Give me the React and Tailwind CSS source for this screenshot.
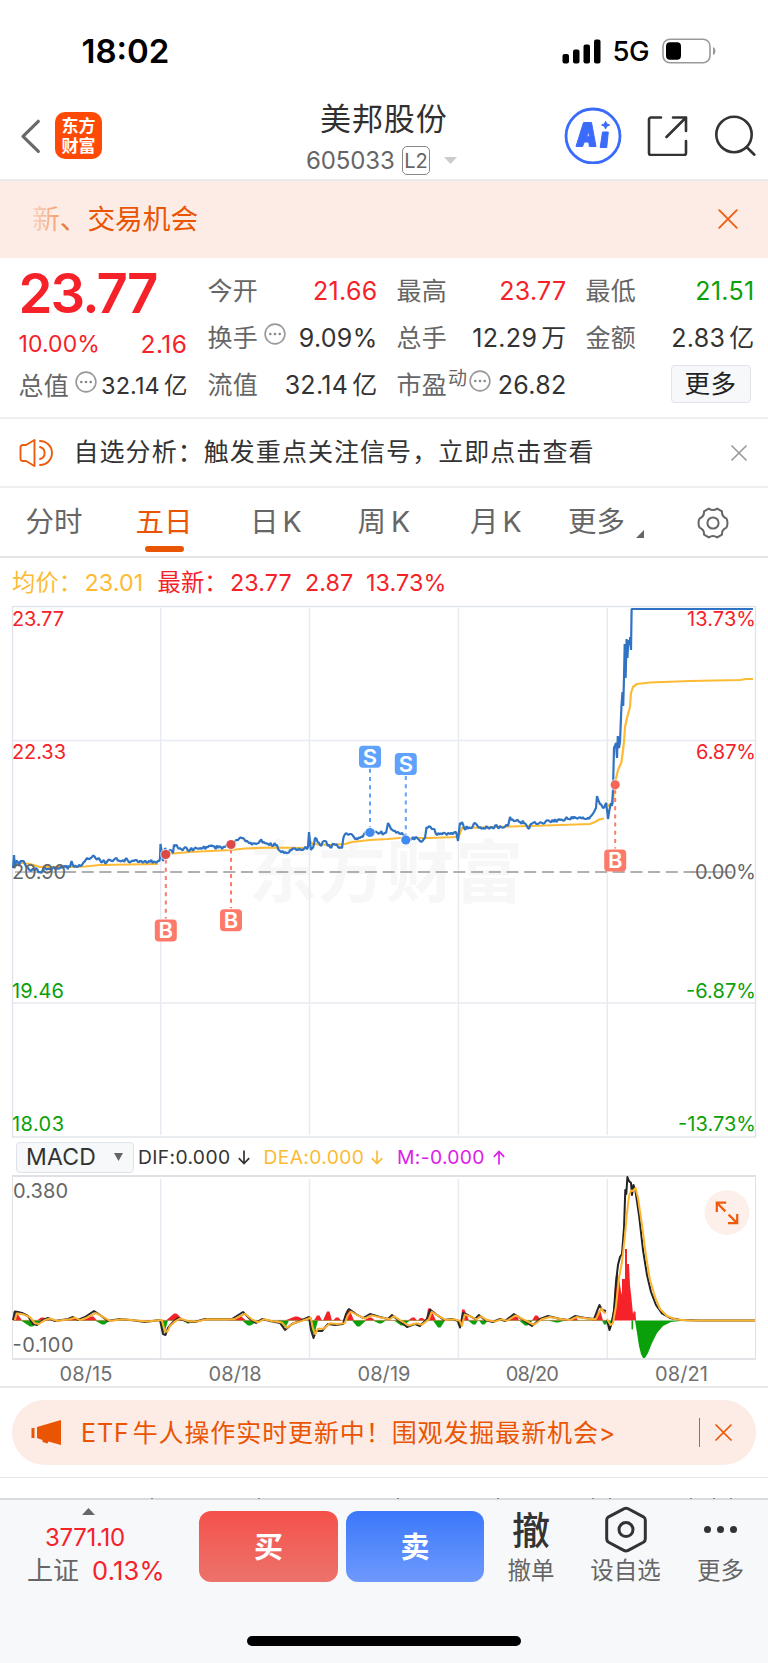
import React from "react";

const FONT = "font-['Inter','Noto_Sans_CJK_SC',sans-serif]";

function rng(seed) {
  let s = seed;
  return () => {
    s = (s * 16807) % 2147483647;
    return s / 2147483647 - 0.5;
  };
}

// Adds intraday jitter between the key points of a series.
function jitter(points, amp, seed) {
  const rand = rng(seed);
  const out = [];
  for (let i = 0; i < points.length - 1; i++) {
    const [x0, y0] = points[i];
    const [x1, y1] = points[i + 1];
    out.push([x0, y0]);
    for (let x = x0 + 1.3; x < x1 - 0.6; x += 1.3) {
      const t = (x - x0) / (x1 - x0);
      out.push([x, y0 + (y1 - y0) * t + rand() * amp]);
    }
  }
  out.push(points[points.length - 1]);
  return out;
}

const toLine = (pts) => pts.map(([x, y]) => `${x.toFixed(1)},${y.toFixed(1)}`).join(" ");

const PRICE = [
  [13, 868], [14, 855], [15, 867], [17, 861], [19, 866], [21, 861], [25, 864], [28, 868], [31, 871], [36, 868], [40, 872], [45, 868], [52, 869], [60, 868], [70, 867],
  [71.5, 861], [74, 867], [82, 865], [88, 859], [92, 857], [100, 860], [106, 863], [110, 860], [125, 860], [140, 861], [150, 862],
  [158, 861], [160, 858], [160.5, 844], [163, 861], [165, 848], [168, 854], [171, 850], [173, 853], [174, 845], [180, 848], [190, 850], [200, 848], [225, 847],
  [231, 843], [238, 840], [243, 838], [248, 842], [256, 844], [260, 841], [268, 844], [277, 845], [280, 851], [284, 853], [290, 850], [303, 850],
  [308, 847], [309, 832], [311, 850], [313, 848], [315, 838], [320, 845], [325, 841], [330, 847], [334, 844], [342, 848], [344, 836], [350, 834],
  [356, 838], [360, 838], [364, 834], [368, 832], [380, 833], [386, 833], [388, 823], [391, 829], [398, 832], [404, 835], [407, 840],
  [413, 837], [420, 841], [425, 838], [426.5, 827.5], [433, 829], [437, 835], [443, 833], [450, 834], [456, 832], [458, 841], [460, 823],
  [462, 822], [464, 828], [470, 828], [475, 823], [480, 827], [490, 828], [500, 826], [508, 826], [510, 817], [515, 821], [525, 823],
  [529, 829], [531, 824], [538, 824], [546, 821], [560, 820], [575, 818], [590, 817], [594, 812], [596, 808], [597, 796], [600, 804], [603, 808],
  [606, 803], [608, 819], [611, 803], [612, 806], [613, 790], [614, 748], [616, 743], [617, 758], [617.8, 736], [619, 748], [620, 742],
  [621.5, 705], [622.5, 692], [623.2, 706], [624, 678], [624.7, 644], [625.6, 678], [626.6, 639], [627.4, 658], [628.4, 640], [629.4, 645],
  [630.2, 637], [631, 650], [631.6, 609], [753, 609],
];

const AVERAGES = [
  [[13, 862], [30, 864], [40, 867], [70, 867], [85, 866.5], [100, 865], [158, 864]],
  [[160, 848], [163, 852], [173, 853.5], [190, 852], [231, 850], [245, 848.5], [270, 847.5], [306, 848]],
  [[309, 840], [313, 844], [330, 845], [345, 844], [352, 842], [370, 840], [388, 839], [400, 838], [430, 838], [456, 837]],
  [[458, 838], [462, 828], [480, 827.5], [510, 826.5], [530, 826], [560, 825], [590, 824], [595, 822], [599, 819.5], [604, 818.5]],
  [[606, 803], [609, 806], [613, 803], [614.5, 785], [618, 770], [621.5, 762], [624, 742], [625, 727], [627, 718], [630, 707], [631, 693], [633, 687], [637, 684], [650, 682.5], [690, 681], [740, 680], [746, 679], [753, 679]],
];

const Z = 1320.4;

const DIF_EARLY = [
  [13, 1320], [15, 1311.5], [18, 1312], [22, 1313], [28, 1316], [33, 1324], [37, 1325], [43, 1320], [48, 1318], [55, 1321], [62, 1320], [68, 1319],
  [73, 1317], [78, 1320], [85, 1317], [94, 1311], [100, 1315], [108, 1321], [120, 1319], [135, 1320.5], [145, 1322], [160, 1320], [163, 1334], [165.5, 1335],
  [168, 1328], [173, 1322], [178, 1318], [188, 1322], [195, 1322], [205, 1319], [218, 1319], [232, 1319], [243, 1312], [250, 1319], [256, 1323],
  [262, 1319], [270, 1321], [280, 1323], [285, 1330], [292, 1324], [300, 1321], [309, 1317], [311, 1330], [313.5, 1338], [316, 1331], [322, 1331], [328, 1324],
  [335, 1325], [343, 1324], [346, 1314], [349, 1309], [356, 1314], [363, 1318], [370, 1314], [380, 1317], [388, 1319], [392, 1315], [398, 1320], [407, 1327],
  [415, 1324], [420, 1326], [427, 1319], [430, 1309.5], [437, 1315], [444, 1320], [452, 1319], [458, 1321], [460, 1327.5], [463, 1313], [468, 1315],
  [475, 1319], [479, 1315], [485, 1320], [493, 1322], [500, 1319], [505, 1321], [514, 1314], [523, 1320], [532, 1326], [540, 1319], [548, 1316],
  [560, 1319], [568, 1320], [575, 1316], [585, 1318], [594, 1319], [597, 1311], [599.5, 1305], [602, 1310], [606, 1311],
];
const DEA_EARLY = DIF_EARLY.map(([x, y]) => [Math.min(x + 1.8, 606), Z + (y - Z) * 0.78]);

const DIF_LATE = [
  [607, 1320], [609.5, 1330], [612, 1322], [614, 1310], [616, 1282], [618, 1265], [620, 1257], [622, 1254], [624, 1228], [625.3, 1190], [626.3, 1194],
  [627.4, 1177], [629, 1181], [631, 1183], [632, 1195], [633.5, 1185], [635.5, 1191], [639, 1215], [643, 1250], [647, 1275], [651, 1292], [656, 1305],
  [662, 1313.5], [670, 1318], [680, 1320], [700, Z], [755, Z],
];
const DEA_LATE = [
  [607, 1319], [610.5, 1325], [613, 1323], [616, 1306], [619, 1278], [622, 1262], [625, 1235], [627, 1213], [629, 1196], [631, 1190.5], [633, 1191],
  [635.5, 1188], [638, 1198], [642, 1225], [646, 1256], [650, 1280], [655, 1297], [660, 1309], [667, 1316], [676, 1319.5], [690, Z], [755, Z],
];

// [start, peak, end, height] of each histogram hump.
const RED = [
  [13, 14.5, 22, 9], [37, 42, 50, 3], [66, 72, 80, 2.5], [82, 92, 97, 4], [166, 175, 184, 7], [228, 240, 246, 4], [285, 296, 307, 4], [314, 318, 322, 5],
  [323, 328, 332, 9], [333, 337, 341, 3], [343, 348, 354, 11], [364, 370, 375, 3], [408, 413, 417, 3], [418, 421, 426, 2.5], [426, 429, 436, 12], [461, 463, 469, 11],
  [508, 515, 519, 6], [532, 536, 541, 5], [571, 575, 578, 2.5], [592, 599, 603, 9],
];
const GREEN = [
  [21, 31, 42, -6], [95, 103, 110, -4], [160, 163, 168, -12], [185, 188, 191, -3], [242, 249, 259, -5], [278, 284, 289, -7], [309, 313, 318, -13],
  [352, 358, 366, -6], [373, 380, 386, -3], [394, 402, 410, -5], [433, 439, 445, -7], [457, 459, 461, -5], [468, 474, 478, -4], [479, 483, 488, -4],
  [519, 526, 533, -5], [548, 557, 565, -2], [602, 605, 607, -4], [607, 610, 612, -6],
];

function Bars({ data, color }) {
  return data.map(([a, p, b, h]) => (
    <polygon key={a} fill={color} points={`${a},${Z} ${p - 1},${Z - h} ${p + 1.5},${Z - h} ${b},${Z}`} />
  ));
}

function AxisText({ x, y, w, fill, end, children }) {
  return (
    <text x={end ? x - w : x} y={y} textLength={w} fill={fill} fontSize="20" className={FONT}>
      {children}
    </text>
  );
}

function Marker({ x, dotY, boxY, label, color, dark }) {
  const from = boxY > dotY ? dotY + 5 : boxY + 12;
  const to = boxY > dotY ? boxY - 12 : dotY - 5;
  return (
    <g>
      <line x1={x} x2={x} y1={from} y2={to} stroke={color} strokeWidth="2" strokeDasharray="4 4.2" />
      <circle cx={x} cy={dotY} r="5.8" fill="white" opacity="0.6" />
      <circle cx={x} cy={dotY} r="4.6" fill={dark} />
      <rect x={x - 11} y={boxY - 11} width="22" height="22" rx="4" fill={color} />
      <text x={x} y={boxY + 7.8} textAnchor="middle" fontSize="22" fontWeight="600" fill="white" className={FONT}>
        {label}
      </text>
    </g>
  );
}

function PriceChart() {
  const red = "#f5222a";
  const green = "#0aa00a";
  return (
    <svg className="block h-[538px] w-[768px] shrink-0" viewBox="0 600 768 538">
      <g fill="#f7f7f7" fontSize="68" fontWeight="700" className="font-['Noto_Sans_CJK_SC',sans-serif]">
        <text x="249" y="897" textLength="274">东方财富</text>
      </g>
      <g stroke="#e7eaf1" strokeWidth="1.5">
        <line x1="12" x2="756" y1="740.5" y2="740.5" />
        <line x1="12" x2="756" y1="1003" y2="1003" />
        {[160.7, 309.5, 458.4, 607.3].map((x) => (
          <line key={x} x1={x} x2={x} y1="608" y2="1135" />
        ))}
      </g>
      <rect x="12.5" y="606.5" width="743" height="530.5" fill="none" stroke="#dfe3e9" strokeWidth="1.3" />
      <line x1="64" x2="700" y1="872" y2="872" stroke="#b0b0b0" strokeWidth="2" strokeDasharray="12 5.7" />
      <line x1="690" x2="732" y1="872" y2="872" stroke="#a0a0a0" strokeWidth="1.6" />
      <line x1="15" x2="66" y1="872" y2="872" stroke="#b0b0b0" strokeWidth="1.4" />
      {AVERAGES.map((a, i) => (
        <polyline key={i} points={toLine(a)} fill="none" stroke="#fdbb35" strokeWidth="2.2" strokeLinejoin="round" />
      ))}
      <polyline points={toLine(jitter(PRICE.slice(0, -1), 4, 77).concat([[753, 609]]))} fill="none" stroke="#2f73c2" strokeWidth="2.2" strokeLinejoin="bevel" />
      <AxisText x={12} y={626} w={52} fill={red}>23.77</AxisText>
      <AxisText x={12} y={758.5} w={54} fill={red}>22.33</AxisText>
      <AxisText x={12} y={878.5} w={54} fill="#666">20.90</AxisText>
      <AxisText x={12} y={998} w={52} fill={green}>19.46</AxisText>
      <AxisText x={12} y={1130.5} w={52} fill={green}>18.03</AxisText>
      <AxisText end x={756} y={626} w={69} fill={red}>13.73%</AxisText>
      <AxisText end x={756} y={758.5} w={60} fill={red}>6.87%</AxisText>
      <AxisText end x={756} y={878.5} w={61} fill="#666">0.00%</AxisText>
      <AxisText end x={756} y={998} w={70} fill={green}>-6.87%</AxisText>
      <AxisText end x={756} y={1130.5} w={78} fill={green}>-13.73%</AxisText>
      <Marker x={165.8} dotY={854.5} boxY={930.5} label="B" color="#fd7a6b" dark="#dd4a45" />
      <Marker x={231} dotY={844.5} boxY={920.3} label="B" color="#fd7a6b" dark="#dd4a45" />
      <Marker x={370} dotY={832.5} boxY={756.8} label="S" color="#5ea2fc" dark="#3f8bf3" />
      <Marker x={405.8} dotY={840} boxY={764} label="S" color="#5ea2fc" dark="#3f8bf3" />
      <Marker x={615.2} dotY={784.8} boxY={860.5} label="B" color="#fd7a6b" dark="#f56558" />
    </svg>
  );
}

function MacdChart() {
  const dates = [["08/15", 86], ["08/18", 235], ["08/19", 384], ["08/20", 532.3], ["08/21", 681.5]];
  return (
    <svg className="block h-[211px] w-[768px] shrink-0" viewBox="0 1175 768 211">
      <g stroke="#e7eaf1" strokeWidth="1.5">
        {[160.7, 309.5, 458.4, 607.3].map((x) => (
          <line key={x} x1={x} x2={x} y1="1179" y2="1358" />
        ))}
      </g>
      <line x1="12" x2="756" y1="1176" y2="1176" stroke="#dfe1e7" strokeWidth="2" />
      <line x1="12" x2="756" y1="1359" y2="1359" stroke="#d9dbe1" strokeWidth="1.5" />
      <line x1="12.5" x2="12.5" y1="1176" y2="1359" stroke="#dfe1e7" />
      <line x1="755.5" x2="755.5" y1="1176" y2="1359" stroke="#dfe1e7" />
      <Bars data={RED} color="#f5222a" />
      <Bars data={GREEN} color="#0aa00a" />
      <polygon fill="#f5222a" points={`611,${Z} 613,1312 614,1302 615,1286 616,1275 617,1272 619,1278 620,1285 621,1291 622,1295 622,1279 625,1279 625,1249 627,1249 627,1264 629,1264 630,1285 631,1294 632,1304 633,1314 634,1311 635.5,1312 636,${Z}`} />
      <rect x="631.5" y={Z} width="1.6" height="9" fill="#0aa00a" />
      <polygon fill="#0aa00a" points={`635,${Z} 637,1333 639,1346 641,1354 643,1358 645,1358 648,1353 652,1343 657,1333 663,1326 671,1322 685,${Z}`} />
      <line x1="14" x2="607" y1={Z} y2={Z} stroke="#9a7a30" strokeWidth="0.8" />
      <g fill="none" strokeWidth="2" strokeLinejoin="round">
        <polyline points={toLine(DIF_EARLY)} stroke="#2a2a2a" />
        <polyline points={toLine(DEA_EARLY)} stroke="#f9b030" />
        <polyline points={toLine(DIF_LATE)} stroke="#222" />
        <polyline points={toLine(DEA_LATE)} stroke="#fdb52e" />
      </g>
      <AxisText x={13} y={1198} w={55} fill="#666">0.380</AxisText>
      <AxisText x={12.5} y={1351.5} w={61} fill="#666">-0.100</AxisText>
      {dates.map(([d, c]) => (
        <AxisText key={d} x={c - 26.5} y={1381} w={53} fill="#707070">{d}</AxisText>
      ))}
      <circle cx="727" cy="1212.5" r="22.5" fill="#fdf0ea" />
      <g fill="none" stroke="#ef5a0f" strokeWidth="2.2">
        <path d="M716.8 1212V1202.7h9.4M717 1203l8.4 8.4" />
        <path d="M737.2 1214V1223.2h-9.2M737 1223l-8.4-8.4" />
      </g>
    </svg>
  );
}

function Dots() {
  return (
    <svg className="h-[22px] w-[22px] shrink-0" viewBox="0 0 22 22">
      <circle cx="11" cy="11" r="9.9" fill="none" stroke="#999" strokeWidth="1.6" />
      <circle cx="6.3" cy="11" r="1.3" fill="#888" />
      <circle cx="11" cy="11" r="1.3" fill="#888" />
      <circle cx="15.7" cy="11" r="1.3" fill="#888" />
    </svg>
  );
}

function Cell({ label, extra, value, color }) {
  return (
    <div className="flex h-[47.300px] items-center justify-between">
      <div className="flex items-center">
        <span className="text-[25px] tracking-[0.200px] text-[#666]">{label}</span>
        {extra}
      </div>
      <span className={`-mr-[1px] text-[25px] tracking-[0.300px] ${color}`}>{value}</span>
    </div>
  );
}

function Close({ size, color, width }) {
  return (
    <svg width={size} height={size} viewBox="0 0 20 20" fill="none" stroke={color} strokeWidth={width} strokeLinecap="round">
      <path d="M1.2 1.2l17.6 17.6M18.8 1.2L1.2 18.8" />
    </svg>
  );
}

function Arrow({ up }) {
  return (
    <svg className="h-[15px] w-[12px]" viewBox="0 0 12 15" fill="none" stroke="currentColor" strokeWidth="1.7">
      <path d={up ? "M6 14.5V1.5M.8 6.8L6 1.4l5.2 5.4" : "M6 .5v13M.8 8.2L6 13.6l5.2-5.4"} />
    </svg>
  );
}

function Header() {
  return (
    <header className="flex h-[91px] shrink-0 border-b-2 border-[#e8eaec]">
      <div className="flex w-[306px] items-start pl-[20px]">
        <svg className="mt-[29px] h-[35px] w-[21px]" viewBox="0 0 21 35" fill="none" stroke="#6a6a6a" strokeWidth="3.2" strokeLinecap="round" strokeLinejoin="round">
          <path d="M18.3 2.3L3 17.3l15.3 15" />
        </svg>
        <div className="mt-[22px] ml-[14px] flex h-[47px] w-[47px] flex-col items-center justify-center rounded-[10px] bg-[#ff4a05] pb-[1px] font-['Noto_Sans_CJK_SC',sans-serif] text-[17px] leading-[20px] font-bold text-white">
          <span className="h-[20px]">东方</span>
          <span className="h-[20px]">财富</span>
        </div>
      </div>
      <div className="flex w-[154px] flex-col pt-[12px]">
        <div className="pl-[14px] text-[31px] leading-[33px] tracking-[0.900px] whitespace-nowrap text-[#303030]">美邦股份</div>
        <div className="mt-[11px] flex items-center">
          <span className="w-[96px] text-[24px] leading-[29px] tracking-[-0.1px] text-[#666]">605033</span>
          <span className="flex h-[29px] w-[28px] items-center justify-center rounded-[5px] border border-[#888] text-[20px] text-[#666]">L2</span>
          <svg className="ml-[14px] h-[7px] w-[13px]" viewBox="0 0 13 7"><path d="M0 0h13L6.5 7z" fill="#ccc" /></svg>
        </div>
      </div>
      <div className="flex items-start pt-[16px] pl-[103.500px]">
        <svg className="h-[58px] w-[58px]" viewBox="0 0 58 58">
          <circle cx="29" cy="30" r="27" fill="none" stroke="#3a6bfb" strokeWidth="2.8" />
          <g fill="#3a6bfb" stroke="#3a6bfb" strokeWidth="1" strokeLinejoin="round">
            <path fillRule="evenodd" d="M19.5 16.5h8l4.5 24h-6.6l-.7-4.5h-4.4l-1.7 4.5h-6.6zM22.7 30.7h2.7l-.7-5.4z" />
            <path d="M38.5 26h5.8l-1.6 15.5H36.2z" />
            <path d="M41.6 15.3l1.2 2.6 2.8 1.1-2.8 1.3-1.2 2.6-1.2-2.6-2.8-1.3 2.8-1.1z" />
          </g>
        </svg>
        <svg className="mt-[8px] ml-[24px] h-[42px] w-[42px]" viewBox="0 0 42 42" fill="none" stroke="#333" strokeWidth="2.6" strokeLinecap="round" strokeLinejoin="round">
          <path d="M15 3.5H5a2 2 0 0 0-2 2V39a2 2 0 0 0 2 2h33a2 2 0 0 0 2-2V27M27 3.5h13V17M40 3.5L20.500 23" />
        </svg>
        <svg className="mt-[8px] ml-[25.500px] h-[44px] w-[44px]" viewBox="0 0 44 44" fill="none" stroke="#333" strokeWidth="2.6" strokeLinecap="round">
          <circle cx="21" cy="20.5" r="17.7" />
          <path d="M33.8 33.2l7.600 7.500" />
        </svg>
      </div>
    </header>
  );
}

function Quotes() {
  const dark = "text-[#333]";
  const red = "text-[#f5222a]";
  return (
    <section className="grid h-[161px] shrink-0 grid-cols-[169px_169px_169px_168px] gap-x-5 border-b-2 border-[#eeeff1] pt-[9.500px] pl-[18.500px] leading-none whitespace-nowrap">
      <div>
        <div className={`flex h-[52px] items-center text-[54.500px] font-semibold tracking-[-1.900px] ${red}`}>23.77</div>
        <div className={`flex h-[43px] items-center justify-between pt-[6px] text-[23px] ${red}`}>
          <span className="tracking-[0.100px]">10.00%</span>
          <span className="text-[24.500px] tracking-[0.500px]">2.16</span>
        </div>
        <div className="flex h-[47px] items-center">
          <span className="text-[25px] tracking-[0.200px] text-[#666]">总值</span>
          <span className="mb-[9px] ml-[6px]"><Dots /></span>
          <span className={`ml-auto text-[23.5px] tracking-[0.100px] ${dark}`}>32.14<span className="ml-[4px]">亿</span></span>
        </div>
      </div>
      <div>
        <Cell label="今开" value="21.66" color={red} />
        <Cell label="换手" extra={<span className="mb-[9px] ml-[6px]"><Dots /></span>} value="9.09%" color={dark} />
        <Cell label="流值" value={<>32.14<span className="ml-[4px]">亿</span></>} color={dark} />
      </div>
      <div>
        <Cell label="最高" value="23.77" color={red} />
        <Cell label="总手" value={<>12.29<span className="ml-[4px]">万</span></>} color={dark} />
        <Cell
          label="市盈"
          extra={
            <span className="mb-[9px] flex items-center">
              <span className="mt-[-5px] mr-[2px] ml-[1px] text-[19px] text-[#666]">动</span>
              <Dots />
            </span>
          }
          value="26.82"
          color={dark}
        />
      </div>
      <div>
        <Cell label="最低" value="21.51" color="text-[#0aa00a]" />
        <Cell label="金额" value={<>2.83<span className="ml-[4px]">亿</span></>} color={dark} />
        <div className="flex h-[47px] items-center justify-end pr-[3px]">
          <div className="mb-[4px] flex h-[38px] w-[80px] items-center justify-center rounded-[4px] border-[1.5px] border-[#e0e3e9] bg-[#f6f8fa] pt-[1px] text-[25.500px] tracking-[0.500px] text-[#222]">更多</div>
        </div>
      </div>
    </section>
  );
}

function Tabs() {
  const tab = "flex items-center whitespace-nowrap";
  return (
    <nav className="flex h-[70px] shrink-0 items-center border-b-2 border-[#e2e5e8] pt-[1px] text-[28.500px] leading-none text-[#666]">
      <div className={`${tab} w-[109px] pl-[25.500px]`}>分时</div>
      <div className="relative flex h-full w-[110px] items-center pl-[26.500px] text-[#ea5504]">
        五日
        <span className="absolute top-[57px] left-[36px] h-[6px] w-[39px] rounded-full bg-[#ea5504]" />
      </div>
      <div className={`${tab} w-[110px] pl-[31px]`}>日<span className="ml-[4px]">K</span></div>
      <div className={`${tab} w-[110px] pl-[28.500px]`}>周<span className="ml-[5px]">K</span></div>
      <div className={`${tab} w-[110px] pl-[31px]`}>月<span className="ml-[4px]">K</span></div>
      <div className={`${tab} w-[147px] pl-[19px]`}>
        更多
        <svg className="mt-[22px] ml-[11px] h-[8px] w-[8px]" viewBox="0 0 8 8"><path d="M8 0v8H0z" fill="#666" /></svg>
      </div>
      <svg className="h-[34px] w-[34px]" viewBox="0 0 34 34" fill="none" stroke="#666" strokeWidth="2" strokeLinejoin="round">
        <path d="M12.8 2.6Q17 5.6 21.2 2.6L26 5.4Q25.6 10.4 30.4 12.4Q31.6 14.5 31.4 17Q31.6 19.500 30.400 21.600Q25.600 23.600 26 28.600L21.200 31.400Q17 28.400 12.800 31.400L8 28.600Q8.400 23.600 3.600 21.600Q2.400 19.500 2.600 17Q2.400 14.500 3.600 12.400Q8.400 10.400 8 5.400Z" />
        <circle cx="17" cy="17" r="5.6" />
      </svg>
    </nav>
  );
}

function BottomBar() {
  const specks = [151, 258, 397, 497, 592, 609, 690, 713, 730];
  return (
    <>
      <div className="relative h-[21px] shrink-0 border-t border-[#e3e5e9]">
        {specks.map((x) => (
          <span key={x} className="absolute top-[20px] h-[1px] w-[2px] bg-[#888]" style={{ left: x }} />
        ))}
      </div>
      <footer className="flex h-[166px] shrink-0 flex-col border-t-2 border-[#d9dcdf] bg-[#f6f8fa] leading-none whitespace-nowrap">
        <div className="flex h-[84px]">
          <div className="flex w-[199px] flex-col pt-[8px]">
            <svg className="ml-[82px] h-[7px] w-[13px]" viewBox="0 0 13 7"><path d="M6.500 0L13 7H0z" fill="#666" /></svg>
            <span className="mt-[11px] pl-[45px] text-[24px] tracking-[-0.3px] text-[#f5222a]">3771.10</span>
            <div className="mt-[8px] flex items-center pl-[27px]">
              <span className="text-[26px] text-[#666]">上证</span>
              <span className="ml-[13px] text-[25.500px] tracking-[0.200px] text-[#f5222a]">0.13%</span>
            </div>
          </div>
          <div className="mt-[11px] flex h-[71px] w-[139px] items-center justify-center rounded-[12px] bg-linear-to-b from-[#f4504a] to-[#ec726b] pt-[1px] text-[29px] font-bold text-white">买</div>
          <div className="mt-[11px] ml-[8px] flex h-[71px] w-[138px] items-center justify-center rounded-[12px] bg-linear-to-b from-[#3b78fa] to-[#6e99fd] pt-[1px] text-[29px] font-bold text-white">卖</div>
          <div className="flex w-[94px] flex-col items-center">
            <span className="flex h-[59px] items-center text-[38px] font-medium text-[#333]">撤</span>
            <span className="text-[23.500px] text-[#666]">撤单</span>
          </div>
          <div className="flex w-[95px] flex-col items-center">
            <svg className="mt-[6px] h-[48px] w-[44px]" viewBox="0 0 44 48" fill="none" stroke="#333" strokeWidth="3" strokeLinejoin="round">
              <path d="M19.800 2.800Q22 1.600 24.200 2.800L39.400 10.800Q41.300 11.900 41.300 14V33Q41.300 35.100 39.400 36.200L24.200 44.400Q22 45.600 19.800 44.400L4.600 36.200Q2.700 35.100 2.700 33V14Q2.700 11.900 4.600 10.800Z" />
              <circle cx="22" cy="23.600" r="7" />
            </svg>
            <span className="mt-[5px] text-[23.500px] text-[#666]">设自选</span>
          </div>
          <div className="ml-[24px] flex w-[47px] flex-col items-center">
            <div className="flex h-[59px] items-center gap-[6.500px]">
              <i className="h-[6.500px] w-[6.500px] rounded-full bg-[#333]" />
              <i className="h-[6.500px] w-[6.500px] rounded-full bg-[#333]" />
              <i className="h-[6.500px] w-[6.500px] rounded-full bg-[#333]" />
            </div>
            <span className="text-[23.500px] text-[#666]">更多</span>
          </div>
        </div>
        <div className="mt-[52px] h-[10px] w-[274px] self-center rounded-full bg-black" />
      </footer>
    </>
  );
}

export default function App() {
  return (
    <div className={`flex h-[1663px] w-[768px] flex-col overflow-hidden bg-white ${FONT}`}>
      <div className="flex h-[90px] shrink-0 items-center pt-[12px] pl-[81.500px] leading-none text-black">
        <span className="w-[480px] text-[33px] font-semibold tracking-[0px]">18:02</span>
        <svg className="h-[25px] w-[40px]" viewBox="0 0 40 25">
          <rect x="0.500" y="15" width="6.500" height="9.500" rx="2" />
          <rect x="11" y="10.500" width="6.500" height="14" rx="2" />
          <rect x="21.500" y="5.500" width="6.500" height="19" rx="2" />
          <rect x="32" y="0.500" width="6.500" height="24" rx="2" />
        </svg>
        <span className="mt-[2px] ml-[11px] w-[49.500px] text-[27.500px] font-medium tracking-[-0.500px]">5G</span>
        <svg className="h-[26px] w-[55px]" viewBox="0 0 55 26">
          <rect x="1" y="1.200" width="47" height="23.600" rx="7" fill="none" stroke="#999" strokeWidth="1.600" />
          <rect x="4" y="4.300" width="15" height="17.500" rx="4" />
          <path d="M51 9q2.500 1 2.500 4t-2.500 4z" fill="#999" />
        </svg>
      </div>
      <Header />
      <div className="flex h-[77px] shrink-0 items-center justify-between bg-[#fcece5] pr-[30px] pl-[32px] text-[27.700px] leading-none text-[#ea5504]">
        <div className="flex">
          <span className="bg-linear-to-r from-[#f9d4c0] to-[#f19d6c] bg-clip-text text-transparent">新</span>
          <span className="text-[#ee7a38]">、</span>
          <span>交易机会</span>
        </div>
        <span className="-mt-[2px]"><Close size={20} color="#ef5f14" width={1.9} /></span>
      </div>
      <Quotes />
      <div className="flex h-[69px] shrink-0 items-center border-b-2 border-[#eeeff1] pl-[19px] leading-none whitespace-nowrap">
        <svg className="h-[30px] w-[34px]" viewBox="0 0 34 30" fill="none" stroke="#ec5c10" strokeWidth="1.900" strokeLinecap="round" strokeLinejoin="round">
          <path d="M15.500 2L7 7H4Q1.500 7 1.500 9.500V20.500Q1.500 23 4 23H7l8.500 5z" />
          <path d="M21 9a6.200 6.200 0 0 1 0 12M21 3a12 12 0 0 1 0 24" />
        </svg>
        <span className="ml-[20.500px] w-[657.500px] text-[25px] tracking-[1.050px] text-[#333]">自选分析：触发重点关注信号，立即点击查看</span>
        <Close size={16} color="#999" width={2} />
      </div>
      <Tabs />
      <div className="flex h-[42px] shrink-0 items-center pt-[7px] pl-[12px] text-[23.300px] leading-none tracking-[0.100px] whitespace-nowrap text-[#f5222a]">
        <span className="w-[72.500px] text-[#fdbb35]">均价：</span>
        <span className="w-[73px] text-[#fdbb35]">23.01</span>
        <span className="w-[72.500px]">最新：</span>
        <span className="w-[75px]">23.77</span>
        <span className="w-[61px]">2.87</span>
        <span>13.73%</span>
      </div>
      <PriceChart />
      <div className="flex h-[37px] shrink-0 items-center pt-[1.500px] pl-[16px] text-[19.300px] leading-none tracking-[0.350px] whitespace-nowrap">
        <div className="flex h-[31px] w-[118px] items-center justify-between rounded-[4px] border-[1.500px] border-[#dfe2e8] bg-[#f6f8fa] pr-[10px] pl-[9px] text-[23px] tracking-[0.200px] text-[#333]">
          MACD
          <svg className="h-[8px] w-[9px]" viewBox="0 0 9 8"><path d="M0 0h9L4.500 8z" fill="#666" /></svg>
        </div>
        <span className="ml-[4px] w-[100px] text-[#333]">DIF:0.000</span>
        <span className="text-[#333]"><Arrow /></span>
        <span className="ml-[13.500px] w-[107.500px] text-[#fdbb35]">DEA:0.000</span>
        <span className="text-[#fdbb35]"><Arrow /></span>
        <span className="ml-[14px] w-[96px] text-[#e020e8]">M:-0.000</span>
        <span className="text-[#e020e8]"><Arrow up /></span>
      </div>
      <MacdChart />
      <div className="flex h-[91px] shrink-0 flex-col border-t-2 border-[#e8eaec] pt-[12px] pl-[12px]">
        <div className="flex h-[65px] w-[744px] items-center rounded-full bg-[#fcece5] pl-[19px] text-[25px] leading-none whitespace-nowrap text-[#ea5504]">
          <svg className="h-[28px] w-[32px]" viewBox="0 0 32 28" fill="#ea5504">
            <path d="M0.500 9h3v10h-3zM6 8L30 1v25l-12.500-3.500-1 2-5-1.500v-2L6 19z" />
          </svg>
          <span className="ml-[18px] pt-[1px] tracking-[0.900px]">ETF<span className="ml-[3px]">牛人操作实时更新中！围观发掘最新机会&gt;</span></span>
          <span className="ml-auto h-[29px] w-[1.500px] bg-[#ea5504]" />
          <span className="mr-[24px] ml-[15px]"><Close size={17} color="#ea5504" width={2} /></span>
        </div>
      </div>
      <BottomBar />
    </div>
  );
}
